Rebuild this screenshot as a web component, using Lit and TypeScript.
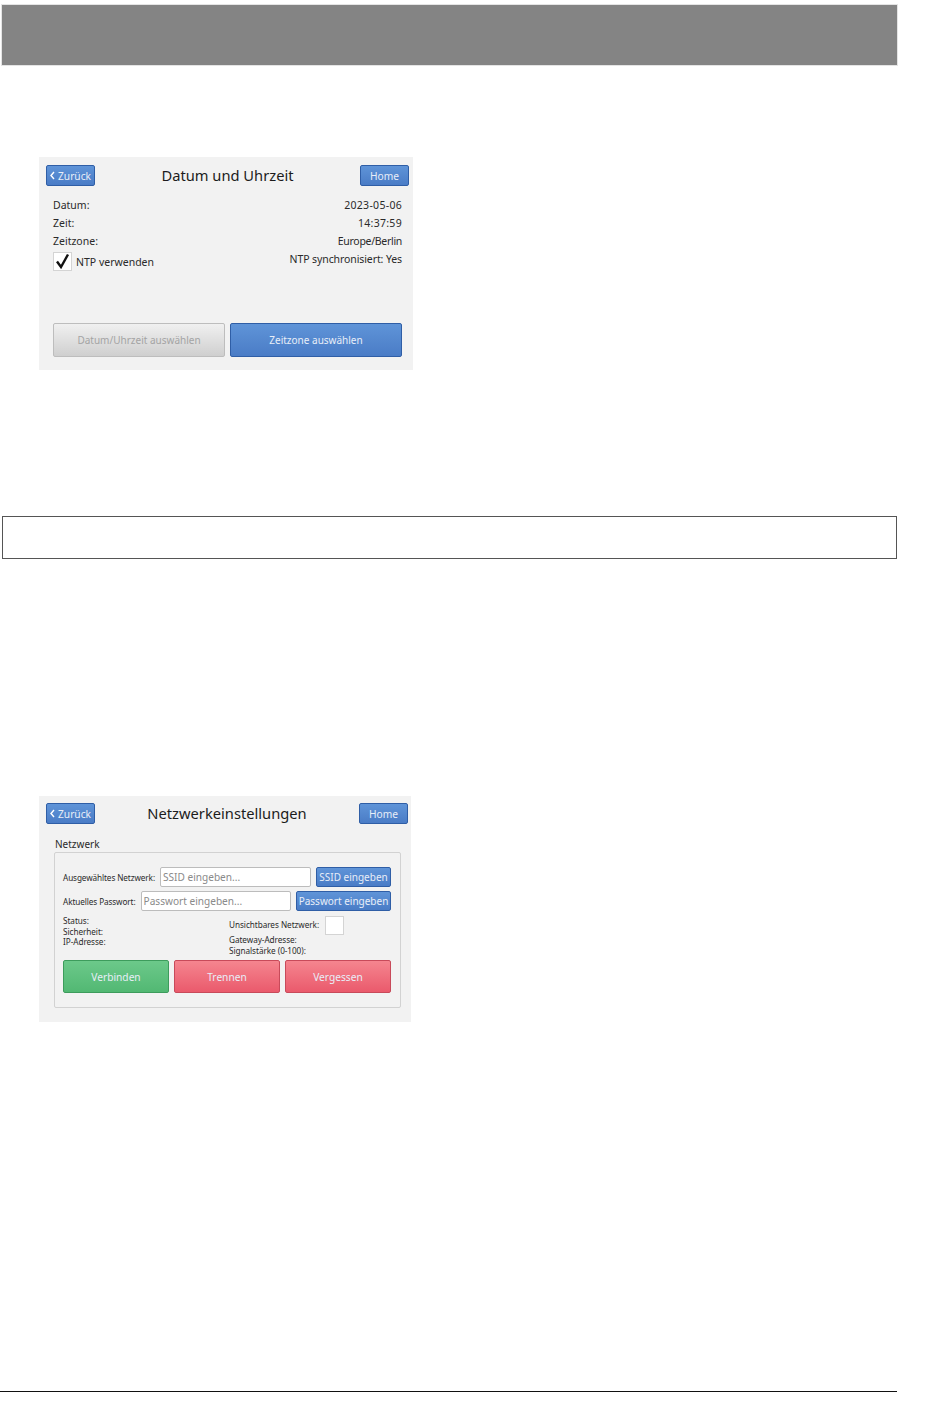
import { LitElement, html, css } from "lit";
import { customElement } from "lit/decorators.js";

const chevron = html`<svg class="chev" width="5" height="9" viewBox="0 0 5 9"><path d="M4 1 1 4.5 4 8" fill="none" stroke="#fff" stroke-width="1.4"/></svg>`;

@customElement("app-root")
export class AppRoot extends LitElement {
  static styles = css`
    :host { display: block; width: 950px; height: 1409px; background: #fff; overflow: hidden; font-family: "Noto Sans", "DejaVu Sans", sans-serif; color: #222; }
    .page { padding: 5px 53px 0 2px; display: flex; flex-direction: column; height: 1404px; }
    .band { height: 60px; background: #848484; flex: none; box-shadow: 0 0 0 1px #e4e4e4; }
    .panel { background: #f2f2f2; margin-left: 37px; flex: none; box-sizing: border-box; position: relative; }
    .p1 { width: 374px; height: 213px; margin-top: 92px; padding: 8px 4px 13px 7px; display: flex; flex-direction: column; }
    .p2 { width: 372px; height: 226px; margin-top: 237px; padding: 7px 3px 0 7px; display: flex; flex-direction: column; }
    .note { height: 43px; flex: none; box-sizing: border-box; border: 1px solid #555; border-right-width: 1.5px; margin-top: 146px; }
    .rule { height: 1.5px; background: #111; margin: auto 0 0 -2px; flex: none; position: relative; top: -17px; }
    .top { display: grid; grid-template-columns: 49px 1fr 49px; grid-template-rows: 21px; align-items: center; height: 21px; }
    .title { text-align: center; font-size: 14.7px; line-height: 21px; color: #1c1c1c; }
    .btn { box-sizing: border-box; display: flex; align-items: center; justify-content: center; color: #e8eef8; border: 1px solid #2f5ea6; border-radius: 2px; background: linear-gradient(#5f94d8, #4a7cc6); white-space: nowrap; font-size: 10px; }
    .nav { height: 21px; gap: 3px; font-size: 10.2px; }
    .chev { flex: none; }
    .info { display: grid; grid-template-columns: 1fr auto; margin: 10px 7px 0 7px; font-size: 10.5px; line-height: 18px; color: #2a2a2a; }
    .r { text-align: right; }
    .num { letter-spacing: 0.3px; }
    .tight { letter-spacing: -0.3px; }
    .sync { letter-spacing: -0.1px; }
    .ntp { display: flex; align-items: center; gap: 4px; height: 18px; position: relative; top: 2px; }
    .ntp span + span { position: relative; top: 1px; }
    .check { width: 19px; height: 19px; box-sizing: border-box; background: #fff; border: 1px solid #d4d4d4; display: flex; align-items: center; justify-content: center; flex: none; }
    .actions { margin: auto 7px 0 7px; display: grid; grid-template-columns: 172px 172px; gap: 5px; }
    .actions .btn { height: 34px; }
    .off { color: #a4a4a4; background: linear-gradient(#f0f0f0, #cfcfcf); border-color: #bdbdbd; }
    .legend { font-size: 10px; line-height: 14px; margin: 13px 0 1px 9px; color: #2a2a2a; }
    .group { box-sizing: border-box; flex: none; height: 156px; margin-left: 8px; width: 347px; border: 1px solid #d2d2d2; border-radius: 2px; padding: 14px 9px 0 8px; display: flex; flex-direction: column; }
    .row { display: flex; align-items: center; height: 20px; gap: 5px; font-size: 8.2px; letter-spacing: -0.1px; color: #2a2a2a; }
    .row + .row { margin-top: 4px; }
    .row .lbl { white-space: nowrap; }
    .input { flex: 1; box-sizing: border-box; height: 20px; background: #fff; border: 1px solid #bcbcbc; border-radius: 2px; font-size: 10.1px; color: #8a8a8a; display: flex; align-items: center; padding-left: 2px; letter-spacing: 0; white-space: nowrap; }
    .row .btn { height: 20px; letter-spacing: 0; flex: none; }
    .b1 { width: 75px; }
    .b2 { width: 95px; }
    .details { display: grid; grid-template-columns: 166px 1fr; font-size: 8.2px; line-height: 10.5px; height: 45px; margin-top: 4px; color: #2a2a2a; letter-spacing: -0.05px; }
    .hidden { display: flex; align-items: center; gap: 6px; height: 20px; }
    .box { width: 19px; height: 19px; box-sizing: border-box; background: #fff; border: 1px solid #d4d4d4; }
    .left { padding-top: 1px; }
    .trio { display: grid; grid-template-columns: repeat(3, 106px); gap: 5px; }
    .trio .btn { height: 33px; font-size: 10.2px; }
    .green { background: linear-gradient(#6cc98a, #52b873); border-color: #3d9c5c; }
    .red { background: linear-gradient(#f5858f, #ea5a6c); border-color: #c84a5a; }
  `;

  render() {
    return html`
      <div class="page">
        <div class="band"></div>
        <section class="panel p1">
          <div class="top">
            <div class="btn nav">${chevron}Zurück</div>
            <div class="title">Datum und Uhrzeit</div>
            <div class="btn nav">Home</div>
          </div>
          <div class="info">
            <div>Datum:</div><div class="r num">2023-05-06</div>
            <div>Zeit:</div><div class="r num">14:37:59</div>
            <div>Zeitzone:</div><div class="r tight">Europe/Berlin</div>
            <div class="ntp">
              <span class="check"><svg width="15" height="16" viewBox="0 0 15 16"><path d="M2 8.5 6 14 13 1.5" fill="none" stroke="#111" stroke-width="2.4"/></svg></span>
              <span>NTP verwenden</span>
            </div>
            <div class="r sync">NTP synchronisiert: Yes</div>
          </div>
          <div class="actions">
            <div class="btn off">Datum/Uhrzeit auswählen</div>
            <div class="btn">Zeitzone auswählen</div>
          </div>
        </section>
        <div class="note"></div>
        <section class="panel p2">
          <div class="top">
            <div class="btn nav">${chevron}Zurück</div>
            <div class="title">Netzwerkeinstellungen</div>
            <div class="btn nav">Home</div>
          </div>
          <div class="legend">Netzwerk</div>
          <div class="group">
            <div class="row">
              <span class="lbl">Ausgewähltes Netzwerk:</span>
              <span class="input">SSID eingeben...</span>
              <span class="btn b1">SSID eingeben</span>
            </div>
            <div class="row">
              <span class="lbl">Aktuelles Passwort:</span>
              <span class="input">Passwort eingeben...</span>
              <span class="btn b2">Passwort eingeben</span>
            </div>
            <div class="details">
              <div class="left">Status:<br />Sicherheit:<br />IP-Adresse:</div>
              <div>
                <div class="hidden">Unsichtbares Netzwerk:<span class="box"></span></div>
                <div>Gateway-Adresse:<br />Signalstärke (0-100):</div>
              </div>
            </div>
            <div class="trio">
              <div class="btn green">Verbinden</div>
              <div class="btn red">Trennen</div>
              <div class="btn red">Vergessen</div>
            </div>
          </div>
        </section>
        <div class="rule"></div>
      </div>
    `;
  }
}
